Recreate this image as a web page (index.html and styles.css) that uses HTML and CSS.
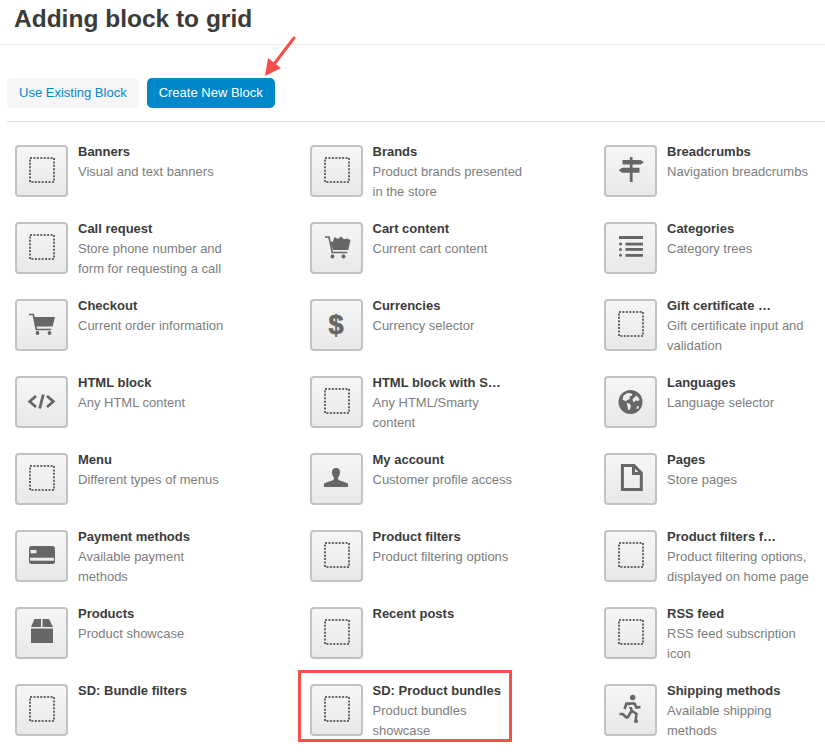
FILE: index.html
```html
<!DOCTYPE html>
<html lang="en">
<head>
<meta charset="utf-8">
<title>Adding block to grid</title>
<link rel="stylesheet" href="styles.css">
</head>
<body>
<svg width="0" height="0" class="defs">
  <defs>
    <symbol id="i-blank" viewBox="0 0 33 32"><rect x="5" y="3" width="24" height="24" fill="none" stroke="#666" stroke-width="2" stroke-dasharray="2 1.43"/></symbol>
  </defs>
</svg>
<header class="head"><h1>Adding block to grid</h1></header>
<div class="tabs">
  <a class="btn btn-light">Use Existing Block</a>
  <a class="btn btn-blue">Create New Block</a>
</div>
<main class="grid">
  <div class="item"><div class="tile"><svg class="ico"><use href="#i-blank"/></svg></div><div class="txt"><b>Banners</b><p>Visual and text banners</p></div></div>
  <div class="item"><div class="tile"><svg class="ico"><use href="#i-blank"/></svg></div><div class="txt"><b>Brands</b><p>Product brands presented in the store</p></div></div>
  <div class="item"><div class="tile"><svg class="ico" viewBox="-0.5 0 33 32"><rect x="15.3" y="2" width="2.8" height="25" fill="#666"/><path d="M8 5h18l3.5 2.300L26 9.600H8zM7.500 12.700H25v5H7.500L4.300 15.200z" fill="#666"/></svg></div><div class="txt"><b>Breadcrumbs</b><p>Navigation breadcrumbs</p></div></div>

  <div class="item"><div class="tile"><svg class="ico"><use href="#i-blank"/></svg></div><div class="txt"><b>Call request</b><p>Store phone number and form for requesting a call</p></div></div>
  <div class="item"><div class="tile"><svg class="ico" viewBox="-0.5 0 33 32"><path d="M4.500 5h4l3.200 15.500h15" fill="none" stroke="#666" stroke-width="1.600"/><path d="M10 10l2.500-.5 1.500-4.500 3.500 2 3-2.500 3 2.800 3-.8 3.500 1.500-2.200 10H12.500z" fill="#666"/><circle cx="12" cy="24.500" r="1.900" fill="#666"/><circle cx="23" cy="24.500" r="1.900" fill="#666"/></svg></div><div class="txt"><b>Cart content</b><p>Current cart content</p></div></div>
  <div class="item"><div class="tile"><svg class="ico" viewBox="-0.5 0 33 32"><rect x="4.500" y="4" width="24" height="3" fill="#666"/><circle cx="6" cy="12" r="1.500" fill="#666"/><rect x="11" y="10.700" width="17.500" height="2.800" fill="#666"/><circle cx="6" cy="17.500" r="1.500" fill="#666"/><rect x="11" y="16" width="17.500" height="2.800" fill="#666"/><circle cx="6" cy="23.200" r="1.500" fill="#666"/><rect x="11" y="22" width="17.500" height="2.800" fill="#666"/></svg></div><div class="txt"><b>Categories</b><p>Category trees</p></div></div>

  <div class="item"><div class="tile"><svg class="ico" viewBox="-0.5 0 33 32"><path d="M3.500 5.500h4.300l3 15h15" fill="none" stroke="#666" stroke-width="1.700"/><path d="M8.500 8h21l-2.400 9.500H10.500z" fill="#666"/><circle cx="12" cy="24" r="1.900" fill="#666"/><circle cx="24" cy="24" r="1.900" fill="#666"/></svg></div><div class="txt"><b>Checkout</b><p>Current order information</p></div></div>
  <div class="item"><div class="tile"><span class="dollar">$</span></div><div class="txt"><b>Currencies</b><p>Currency selector</p></div></div>
  <div class="item"><div class="tile"><svg class="ico"><use href="#i-blank"/></svg></div><div class="txt"><b>Gift certificate …</b><p>Gift certificate input and validation</p></div></div>

  <div class="item"><div class="tile"><svg class="ico" viewBox="-0.5 0 33 32"><path d="M10.500 10l-6.300 5.500 6.300 5.500M21.500 10l6.300 5.500-6.300 5.500M17.800 8.500l-3.600 14" fill="none" stroke="#666" stroke-width="2.800"/></svg></div><div class="txt"><b>HTML block</b><p>Any HTML content</p></div></div>
  <div class="item"><div class="tile"><svg class="ico"><use href="#i-blank"/></svg></div><div class="txt"><b>HTML block with S…</b><p>Any HTML/Smarty content</p></div></div>
  <div class="item"><div class="tile"><svg class="ico" viewBox="-0.5 0 33 32"><circle cx="16" cy="16" r="12" fill="#666"/><path d="M9 9.500l4-2.500 4 .5 1 2-3 1 .5 2.500-3 1-1 1.500-3.500-2zM18 13l4-3.500 3 3.500-1 2-3-.5-1.500 2-1-1.500zM12 17l3 .5 1.500 2.500-1.500 4-1.500-.5-.5-3.500zM22.500 20l2 .5-1 2.500-1.500-.5z" fill="#eee"/></svg></div><div class="txt"><b>Languages</b><p>Language selector</p></div></div>

  <div class="item"><div class="tile"><svg class="ico"><use href="#i-blank"/></svg></div><div class="txt"><b>Menu</b><p>Different types of menus</p></div></div>
  <div class="item"><div class="tile"><svg class="ico" viewBox="-0.5 0 33 32"><path d="M15.500 5c3 0 4.300 2.200 4 5-.2 2-1 3.200-1.800 4.500-.4 1-.2 2 1 2.700 2 1 6.800 2 8.800 3.300v3.500h-24v-3.500c2-1.300 6.800-2.300 8.800-3.300 1.200-.7 1.400-1.700 1-2.700-.8-1.300-1.600-2.500-1.800-4.500-.3-2.800 1-5 4-5z" fill="#666"/></svg></div><div class="txt"><b>My account</b><p>Customer profile access</p></div></div>
  <div class="item"><div class="tile"><svg class="ico" viewBox="-0.5 0 33 32"><path d="M7.900 2.500h11.600l7.300 7.500v16.500H7.900z M19 2.500v8h7.500" fill="none" stroke="#666" stroke-width="3"/></svg></div><div class="txt"><b>Pages</b><p>Store pages</p></div></div>

  <div class="item"><div class="tile"><svg class="ico" viewBox="-0.5 0 33 32"><rect x="3.500" y="6" width="26" height="18" rx="2.500" fill="#666"/><rect x="5" y="10" width="6" height="3.300" fill="#eee"/><rect x="4.500" y="17.700" width="24" height="3" fill="#eee"/></svg></div><div class="txt"><b>Payment methods</b><p>Available payment methods</p></div></div>
  <div class="item"><div class="tile"><svg class="ico"><use href="#i-blank"/></svg></div><div class="txt"><b>Product filters</b><p>Product filtering options</p></div></div>
  <div class="item"><div class="tile"><svg class="ico"><use href="#i-blank"/></svg></div><div class="txt"><b>Product filters f…</b><p>Product filtering options, displayed on home page</p></div></div>

  <div class="item"><div class="tile"><svg class="ico" viewBox="-0.5 0 33 32"><path d="M5.500 10L9 2h6.500v8zM17 10V2h6.500l4 8zM5.500 11.500h22V26h-22z" fill="#666"/></svg></div><div class="txt"><b>Products</b><p>Product showcase</p></div></div>
  <div class="item"><div class="tile"><svg class="ico"><use href="#i-blank"/></svg></div><div class="txt"><b>Recent posts</b></div></div>
  <div class="item"><div class="tile"><svg class="ico"><use href="#i-blank"/></svg></div><div class="txt"><b>RSS feed</b><p>RSS feed subscription icon</p></div></div>

  <div class="item"><div class="tile"><svg class="ico"><use href="#i-blank"/></svg></div><div class="txt"><b>SD: Bundle filters</b></div></div>
  <div class="item"><div class="tile"><svg class="ico"><use href="#i-blank"/></svg></div><div class="txt"><b>SD: Product bundles</b><p>Product bundles showcase</p></div></div>
  <div class="item"><div class="tile"><svg class="ico" viewBox="-0.5 0 33 32"><circle cx="18.200" cy="3.500" r="2.700" fill="#666"/><path d="M11 9.500h9l2 4 4-.5M12 9.500l-2 5.500M14.500 10l3 7 4.500 3-1 7.500h2.500M17 17l-3.500 6-1.500.5-4-3.500H5" fill="none" stroke="#666" stroke-width="2.600"/><rect x="14" y="11" width="4.500" height="2" fill="#eee"/></svg></div><div class="txt"><b>Shipping methods</b><p>Available shipping methods</p></div></div>
</main>
<svg class="arrow" width="40" height="46" viewBox="0 0 40 46"><path d="M33 2L10 32" stroke="#f44f4a" stroke-width="3" stroke-linecap="round" fill="none"/><path d="M4 40L7 22 20 32z" fill="#f44f4a"/></svg>
<div class="marker"></div>
</body>
</html>
```
FILE: styles.css
```css
html, body {
  margin: 0;
  padding: 0;
  height: 755px;
  overflow: hidden;
  background: #fff;
  font-family: "Liberation Sans", Arial, sans-serif;
  font-size: 13px;
  color: #333;
}
.defs { position: absolute; }
.head {
  height: 44px;
  border-bottom: 1px solid #e8e8e8;
  padding-left: 14px;
}
.head h1 {
  margin: 0;
  font-size: 24.5px;
  line-height: 38px;
  font-weight: bold;
  color: #3b3b3b;
}
.tabs {
  display: flex;
  gap: 8px;
  margin-left: 7px;
  padding: 33px 0 13px;
  border-bottom: 1px solid #ddd;
}
.btn {
  height: 30px;
  line-height: 30px;
  padding: 0 12px;
  border-radius: 5px;
  font-size: 13px;
}
.btn-light { background: #f6f6f6; color: #0088cc; }
.btn-blue { background: #0088cc; color: #fff; }
.grid {
  display: grid;
  grid-template-columns: 294.5px 294.5px 1fr;
  grid-auto-rows: 77px;
  padding: 19px 0 0 7px;
}
.item {
  display: flex;
  gap: 10px;
  padding-left: 8px;
}
.tile {
  box-sizing: border-box;
  flex: none;
  width: 53px;
  height: 52px;
  margin-top: 4px;
  display: flex;
  align-items: center;
  justify-content: center;
  border: 2px solid #c2c2c2;
  border-radius: 4px;
  background: linear-gradient(#f6f6f6, #e8e8e8);
}
.ico { width: 33px; height: 32px; display: block; }
.dollar { font-size: 27px; font-weight: bold; line-height: 32px; color: #666; -webkit-text-stroke: 0.6px #666; }
.txt { width: 152px; padding-top: 1px; line-height: 20px; }
.txt b { display: block; white-space: nowrap; color: #3b3b3b; }
.txt p { margin: 0; color: #7d7d7d; }
.arrow { position: absolute; left: 261px; top: 36px; }
.marker {
  position: absolute;
  left: 298px;
  top: 670px;
  width: 208px;
  height: 66px;
  border: 3px solid #f44f4a;
}
```
